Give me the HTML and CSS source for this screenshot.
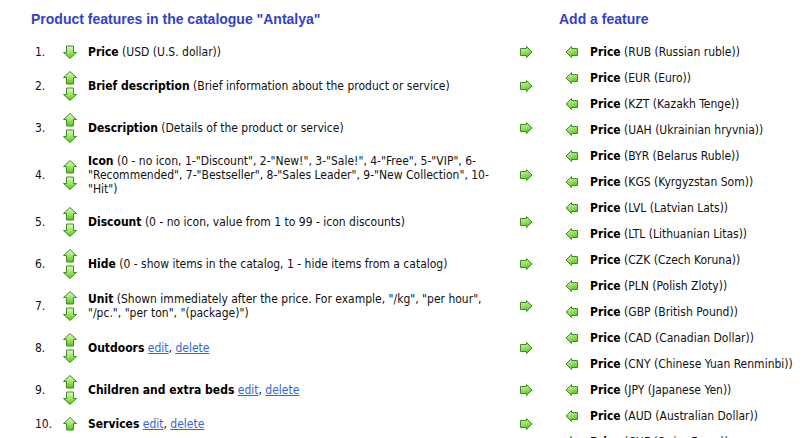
FILE: index.html
```html
<!DOCTYPE html>
<html>
<head>
<meta charset="utf-8">
<title>Product features</title>
<link rel="stylesheet" href="styles.css">
</head>
<body>
<svg class="defs" width="0" height="0" aria-hidden="true">
  <defs>
    <linearGradient id="gv" x1="0" y1="0" x2="0" y2="1">
      <stop offset="0" stop-color="#dcfcb8"/>
      <stop offset="0.5" stop-color="#9ee46a"/>
      <stop offset="1" stop-color="#5cbc2c"/>
    </linearGradient>
    <linearGradient id="gh" x1="0" y1="0" x2="0.3" y2="1">
      <stop offset="0" stop-color="#d4fab0"/>
      <stop offset="0.55" stop-color="#98e066"/>
      <stop offset="1" stop-color="#62c032"/>
    </linearGradient>
    <symbol id="up" viewBox="0 0 16 16"><path d="M8 1.5 L14.5 7.5 L11.5 7.5 L11.5 14 L4.5 14 L4.5 7.5 L1.5 7.5 Z" fill="url(#gv)" stroke="#3f8f1f" stroke-width="1" stroke-linejoin="miter"/></symbol>
    <symbol id="down" viewBox="0 0 16 16"><path d="M8 14.5 L14.5 8.5 L11.5 8.5 L11.5 2 L4.5 2 L4.5 8.5 L1.5 8.5 Z" fill="url(#gv)" stroke="#3f8f1f" stroke-width="1"/></symbol>
    <symbol id="right" viewBox="0 0 16 16"><path d="M2.5 4.5 L8.5 4.5 L8.5 2.5 L14 8 L8.5 13.5 L8.5 11.5 L2.5 11.5 Z" fill="url(#gh)" stroke="#3f8f1f" stroke-width="1"/></symbol>
    <symbol id="left" viewBox="0 0 16 16"><path d="M13.5 4.5 L7.5 4.5 L7.5 2.5 L2 8 L7.5 13.5 L7.5 11.5 L13.5 11.5 Z" fill="url(#gh)" stroke="#3f8f1f" stroke-width="1"/></symbol>
  </defs>
</svg>

<div class="page">
  <section class="features">
    <h2 class="title">Product features in the catalogue "Antalya"</h2>
    <div class="list">
      <div class="row">
        <span class="num">1.</span>
        <span class="moves"><svg class="ico"><use href="#down"/></svg></span>
        <span class="txt"><b>Price</b> (USD (U.S. dollar))</span>
        <span class="add"><svg class="ico"><use href="#right"/></svg></span>
      </div>
      <div class="row">
        <span class="num">2.</span>
        <span class="moves"><svg class="ico"><use href="#up"/></svg><svg class="ico"><use href="#down"/></svg></span>
        <span class="txt"><b>Brief description</b> (Brief information about the product or service)</span>
        <span class="add"><svg class="ico"><use href="#right"/></svg></span>
      </div>
      <div class="row">
        <span class="num">3.</span>
        <span class="moves"><svg class="ico"><use href="#up"/></svg><svg class="ico"><use href="#down"/></svg></span>
        <span class="txt"><b>Description</b> (Details of the product or service)</span>
        <span class="add"><svg class="ico"><use href="#right"/></svg></span>
      </div>
      <div class="row">
        <span class="num">4.</span>
        <span class="moves"><svg class="ico"><use href="#up"/></svg><svg class="ico"><use href="#down"/></svg></span>
        <span class="txt"><b>Icon</b> (0 - no icon, 1-"Discount", 2-"New!", 3-"Sale!", 4-"Free", 5-"VIP", 6-<br>"Recommended", 7-"Bestseller", 8-"Sales Leader", 9-"New Collection", 10-<br>"Hit")</span>
        <span class="add"><svg class="ico"><use href="#right"/></svg></span>
      </div>
      <div class="row">
        <span class="num">5.</span>
        <span class="moves"><svg class="ico"><use href="#up"/></svg><svg class="ico"><use href="#down"/></svg></span>
        <span class="txt"><b>Discount</b> (0 - no icon, value from 1 to 99 - icon discounts)</span>
        <span class="add"><svg class="ico"><use href="#right"/></svg></span>
      </div>
      <div class="row">
        <span class="num">6.</span>
        <span class="moves"><svg class="ico"><use href="#up"/></svg><svg class="ico"><use href="#down"/></svg></span>
        <span class="txt"><b>Hide</b> (0 - show items in the catalog, 1 - hide items from a catalog)</span>
        <span class="add"><svg class="ico"><use href="#right"/></svg></span>
      </div>
      <div class="row">
        <span class="num">7.</span>
        <span class="moves"><svg class="ico"><use href="#up"/></svg><svg class="ico"><use href="#down"/></svg></span>
        <span class="txt"><b>Unit</b> (Shown immediately after the price. For example, "/kg", "per hour",<br>"/pc.", "per ton", "(package)")</span>
        <span class="add"><svg class="ico"><use href="#right"/></svg></span>
      </div>
      <div class="row">
        <span class="num">8.</span>
        <span class="moves"><svg class="ico"><use href="#up"/></svg><svg class="ico"><use href="#down"/></svg></span>
        <span class="txt"><b>Outdoors</b> <a href="#">edit</a>, <a href="#">delete</a></span>
        <span class="add"><svg class="ico"><use href="#right"/></svg></span>
      </div>
      <div class="row">
        <span class="num">9.</span>
        <span class="moves"><svg class="ico"><use href="#up"/></svg><svg class="ico"><use href="#down"/></svg></span>
        <span class="txt"><b>Children and extra beds</b> <a href="#">edit</a>, <a href="#">delete</a></span>
        <span class="add"><svg class="ico"><use href="#right"/></svg></span>
      </div>
      <div class="row">
        <span class="num">10.</span>
        <span class="moves"><svg class="ico"><use href="#up"/></svg></span>
        <span class="txt"><b>Services</b> <a href="#">edit</a>, <a href="#">delete</a></span>
        <span class="add"><svg class="ico"><use href="#right"/></svg></span>
      </div>
    </div>
  </section>

  <section class="available">
    <h2 class="title">Add a feature</h2>
    <div class="alist">
      <div class="arow"><svg class="ico"><use href="#left"/></svg><span class="txt"><b>Price</b> (RUB (Russian ruble))</span></div>
      <div class="arow"><svg class="ico"><use href="#left"/></svg><span class="txt"><b>Price</b> (EUR (Euro))</span></div>
      <div class="arow"><svg class="ico"><use href="#left"/></svg><span class="txt"><b>Price</b> (KZT (Kazakh Tenge))</span></div>
      <div class="arow"><svg class="ico"><use href="#left"/></svg><span class="txt"><b>Price</b> (UAH (Ukrainian hryvnia))</span></div>
      <div class="arow"><svg class="ico"><use href="#left"/></svg><span class="txt"><b>Price</b> (BYR (Belarus Ruble))</span></div>
      <div class="arow"><svg class="ico"><use href="#left"/></svg><span class="txt"><b>Price</b> (KGS (Kyrgyzstan Som))</span></div>
      <div class="arow"><svg class="ico"><use href="#left"/></svg><span class="txt"><b>Price</b> (LVL (Latvian Lats))</span></div>
      <div class="arow"><svg class="ico"><use href="#left"/></svg><span class="txt"><b>Price</b> (LTL (Lithuanian Litas))</span></div>
      <div class="arow"><svg class="ico"><use href="#left"/></svg><span class="txt"><b>Price</b> (CZK (Czech Koruna))</span></div>
      <div class="arow"><svg class="ico"><use href="#left"/></svg><span class="txt"><b>Price</b> (PLN (Polish Zloty))</span></div>
      <div class="arow"><svg class="ico"><use href="#left"/></svg><span class="txt"><b>Price</b> (GBP (British Pound))</span></div>
      <div class="arow"><svg class="ico"><use href="#left"/></svg><span class="txt"><b>Price</b> (CAD (Canadian Dollar))</span></div>
      <div class="arow"><svg class="ico"><use href="#left"/></svg><span class="txt"><b>Price</b> (CNY (Chinese Yuan Renminbi))</span></div>
      <div class="arow"><svg class="ico"><use href="#left"/></svg><span class="txt"><b>Price</b> (JPY (Japanese Yen))</span></div>
      <div class="arow"><svg class="ico"><use href="#left"/></svg><span class="txt"><b>Price</b> (AUD (Australian Dollar))</span></div>
      <div class="arow"><svg class="ico"><use href="#left"/></svg><span class="txt"><b>Price</b> (CHF (Swiss Franc))</span></div>
    </div>
  </section>
</div>
</body>
</html>
```

FILE: styles.css
```css
html, body {
  margin: 0;
  padding: 0;
  background: #ffffff;
  overflow: hidden;
}

body {
  font-family: "DejaVu Sans Condensed", "DejaVu Sans", sans-serif;
  font-size: 12px;
  line-height: 14px;
  color: #111111;
}

.defs {
  position: absolute;
  width: 0;
  height: 0;
  overflow: hidden;
}

.page {
  display: flex;
  align-items: flex-start;
  padding-left: 31px;
}

.title {
  margin: 11px 0 12px 0;
  font-family: "Liberation Sans", Arial, sans-serif;
  font-size: 14px;
  line-height: 16px;
  font-weight: bold;
  color: #3142cc;
}

.features {
  width: 528px;
}

.list {
  display: flex;
  flex-direction: column;
}

.row {
  display: grid;
  grid-template-columns: 27px 26px 430px 16px;
  align-items: center;
  padding: 5px 0 5px 4px;
}

.num {
  color: #111111;
}

.moves {
  display: flex;
  flex-direction: column;
}

.ico {
  display: block;
  width: 16px;
  height: 16px;
}

.txt b {
  font-weight: bold;
  color: #000000;
}

.txt a {
  color: #3466d6;
  text-decoration: underline;
}

.alist {
  display: flex;
  flex-direction: column;
}

.arow {
  display: flex;
  align-items: center;
  height: 26px;
  padding-left: 5px;
  gap: 10px;
  white-space: nowrap;
}
```
